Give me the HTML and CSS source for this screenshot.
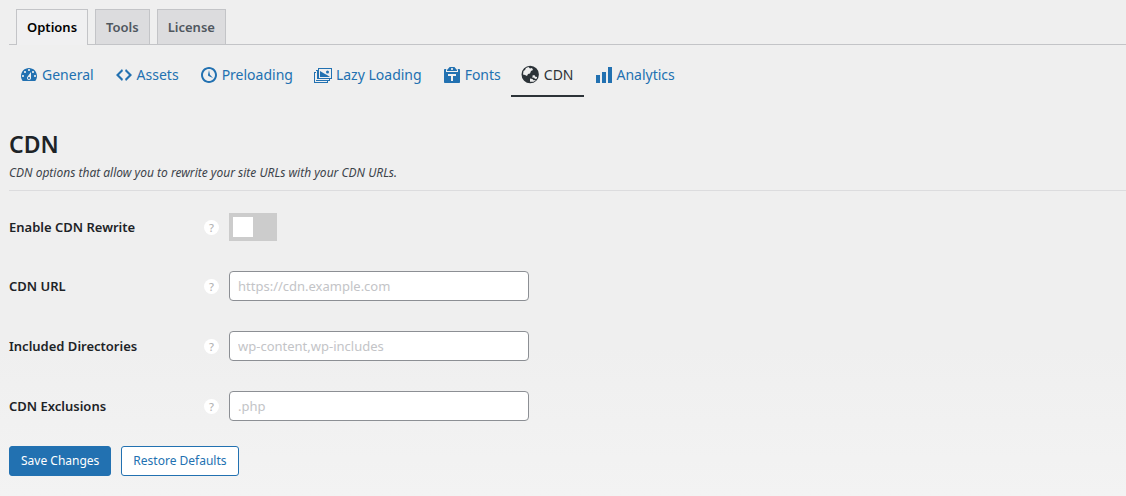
FILE: index.html
```
<!DOCTYPE html>
<html lang="en">
<head>
<meta charset="utf-8">
<title>CDN Options</title>
<link rel="stylesheet" href="styles.css">
</head>
<body>
<main class="wrap">
  <nav class="tabs" aria-label="Sections">
    <a class="tab tab-active" href="#options" aria-current="page">Options</a>
    <a class="tab" href="#tools">Tools</a>
    <a class="tab" href="#license">License</a>
  </nav>

  <nav class="subnav" aria-label="Options">
    <a class="subnav-item" href="#general"><svg class="icon" viewBox="0 0 20 20"><path fill-rule="evenodd" d="M3.76 16h12.48c1.1-1.37 1.76-3.11 1.76-5 0-4.42-3.58-8-8-8s-8 3.58-8 8c0 1.89.66 3.63 1.76 5zM10 4c.55 0 1 .45 1 1s-.45 1-1 1-1-.45-1-1 .45-1 1-1zM6 6c.55 0 1 .45 1 1s-.45 1-1 1-1-.45-1-1 .45-1 1-1zm8 0c.55 0 1 .45 1 1s-.45 1-1 1-1-.45-1-1 .45-1 1-1zm-5.37 5.55L12 7v6c0 1.1-.9 2-2 2s-2-.9-2-2c0-.57.24-1.08.63-1.45zM4 10c.55 0 1 .45 1 1s-.45 1-1 1-1-.45-1-1 .45-1 1-1zm12 0c.55 0 1 .45 1 1s-.45 1-1 1-1-.45-1-1 .45-1 1-1zm-5 3c0-.55-.45-1-1-1s-1 .45-1 1 .45 1 1 1 1-.45 1-1z"/></svg>General</a>
    <a class="subnav-item" href="#assets"><svg class="icon" viewBox="0 0 20 20"><path d="M9 6l-4 4 4 4-1 2-6-6 6-6zm2 8l4-4-4-4 1-2 6 6-6 6z"/></svg>Assets</a>
    <a class="subnav-item" href="#preloading"><svg class="icon" viewBox="0 0 20 20"><path fill-rule="evenodd" d="M10 2c4.42 0 8 3.58 8 8s-3.58 8-8 8-8-3.58-8-8 3.58-8 8-8zm0 14c3.31 0 6-2.69 6-6s-2.69-6-6-6-6 2.69-6 6 2.69 6 6 6zm-.71-5.29c.07.05.14.1.23.15l-.02.02L14 13l-3.03-3.19L10 5l-.97 4.81h.01c0 .02-.01.05-.02.09S9 9.97 9 10c0 .28.1.52.29.71z"/></svg>Preloading</a>
    <a class="subnav-item" href="#lazy"><svg class="icon" viewBox="0 0 20 20"><path fill-rule="evenodd" d="M5 3h14v11h-2v2h-2v2H1V7h2V5h2zM6 4v9h12V4zM4 6v8h12v1H3V6zM2 8v9h12v-1H3V8zM7 12V6l5 3 2 1 3 2zM13 7a1.500 1.500 0 1 0 3 0a1.500 1.500 0 1 0-3 0z"/></svg>Lazy Loading</a>
    <a class="subnav-item" href="#fonts"><svg class="icon" viewBox="0 0 20 20"><path fill-rule="evenodd" d="M12.380 2L15 5v1H5V5l2.640-3zM10 5c.55 0 1-.44 1-1 0-.55-.45-1-1-1s-1 .45-1 1c0 .56.45 1 1 1zm5.450-1H17c.55 0 1 .45 1 1v12c0 .56-.45 1-1 1H3c-.55 0-1-.44-1-1V5c0-.55.45-1 1-1h1.550L4 4.630V7h12V4.630zM14 11V9H6v2h3v5h2v-5h3z"/></svg>Fonts</a>
    <a class="subnav-item subnav-active" href="#cdn" aria-current="page"><svg class="icon" viewBox="0 0 20 20"><path fill-rule="evenodd" d="M9.200.8a8.700 8.700 0 1 0 0 17.400a8.700 8.700 0 0 0 0-17.400zM5 3L7.500 2l1.500 1.500L11 3l1 2-2 1-1 2.500L7 9l-1 2-2-1-2-.5.500-3.500L4 5zM11.500 10.500l2-.5.500 1.500 2 .5v1.500l-2 .5-1-1.500-1.500.5zM9 13.500l2.500.5 1 1.200 2.500-.2-2.500 1.800H9z"/></svg>CDN</a>
    <a class="subnav-item" href="#analytics"><svg class="icon" viewBox="0 0 20 20"><path d="M18 18V2h-4v16h4zm-6 0V7H8v11h4zm-6 0v-8H2v8h4z"/></svg>Analytics</a>
  </nav>

  <header class="section-head">
    <h2 class="title">CDN</h2>
    <p class="subtitle">CDN options that allow you to rewrite your site URLs with your CDN URLs.</p>
  </header>

  <form class="form">
    <div class="row">
      <label class="label" for="enable">Enable CDN Rewrite</label>
      <button class="help" type="button" aria-label="Help">?</button>
      <input class="switch" type="checkbox" role="switch" id="enable">
    </div>
    <div class="row">
      <label class="label" for="url">CDN URL</label>
      <button class="help" type="button" aria-label="Help">?</button>
      <input class="field" type="text" id="url" placeholder="https://cdn.example.com">
    </div>
    <div class="row">
      <label class="label" for="dirs">Included Directories</label>
      <button class="help" type="button" aria-label="Help">?</button>
      <input class="field" type="text" id="dirs" placeholder="wp-content,wp-includes">
    </div>
    <div class="row">
      <label class="label" for="exclusions">CDN Exclusions</label>
      <button class="help" type="button" aria-label="Help">?</button>
      <input class="field" type="text" id="exclusions" placeholder=".php">
    </div>
    <div class="actions">
      <button class="btn btn-primary" type="submit">Save Changes</button>
      <button class="btn" type="button">Restore Defaults</button>
    </div>
  </form>
</main>
</body>
</html>
```
FILE: styles.css
```
* { box-sizing: border-box; }
body {
  margin: 0;
  min-height: 100vh;
  background: linear-gradient(#efefef 70%, #f3f3f3);
  color: #1d2327;
  font-family: "Segoe UI", "Noto Sans", sans-serif;
  font-size: 13px;
  line-height: 20px;
}
.wrap { padding: 9px 0 20px 9px; }
.tabs {
  display: flex;
  gap: 7px;
  padding-left: 7px;
  border-bottom: 1px solid #c3c4c7;
}
.tab {
  padding: 6px 10px 5px;
  border: 1px solid #c3c4c7;
  border-bottom: 0;
  background: #dcdcde;
  color: #50575e;
  font-weight: 600;
  line-height: 23px;
  text-decoration: none;
}
.tab-active {
  margin-bottom: -1px;
  background: #f0f0f1;
  color: #000;
}
.subnav { display: flex; padding-top: 8px; }
.subnav-item {
  display: flex;
  align-items: center;
  gap: 3px;
  padding: 2px 10px 0;
  height: 44px;
  border-bottom: 2px solid transparent;
  color: #2271b1;
  font-size: 14px;
  text-decoration: none;
}
.subnav-active { border-bottom-color: #2c3338; color: #2c3338; }
.icon { width: 20px; height: 20px; fill: currentColor; }
.section-head {
  margin-top: 31px;
  padding-bottom: 7px;
  border-bottom: 1px solid #dcdcde;
}
.title { margin: 0; font-size: 23px; font-weight: 600; line-height: 32px; }
.subtitle { margin: 3px 0 0; color: #3c434a; font-size: 12px; font-style: italic; }
.form { padding-top: 22px; }
.row { display: flex; align-items: center; margin-bottom: 30px; }
.row:nth-last-child(2) { margin-bottom: 25px; }
.label { width: 195px; font-weight: 600; }
.help {
  width: 15px;
  height: 15px;
  margin-right: 10px;
  padding: 0;
  border: 0;
  border-radius: 50%;
  background: #fff;
  color: #b4b4b4;
  font: 500 11px/15px "Noto Sans", sans-serif;
}
.switch {
  appearance: none;
  width: 48px;
  height: 28px;
  margin: 0;
  padding: 4px;
  background: #ccc;
}
.switch::before { content: ""; display: block; width: 20px; height: 20px; background: #fff; }
.switch:checked { background: #2271b1; }
.switch:checked::before { margin-left: 20px; }
.field {
  width: 300px;
  height: 30px;
  padding: 0 8px;
  border: 1px solid #8c8f94;
  border-radius: 4px;
  background: #fff;
  color: #2c3338;
  font: inherit;
}
.field::placeholder { color: #c3c4c7; }
.actions { display: flex; gap: 10px; }
.btn {
  height: 30px;
  padding: 0 11px;
  border: 1px solid #2271b1;
  border-radius: 3px;
  background: #fff;
  color: #2271b1;
  font: inherit;
  font-size: 12px;
}
.btn-primary { background: #2271b1; color: #fff; }
```
